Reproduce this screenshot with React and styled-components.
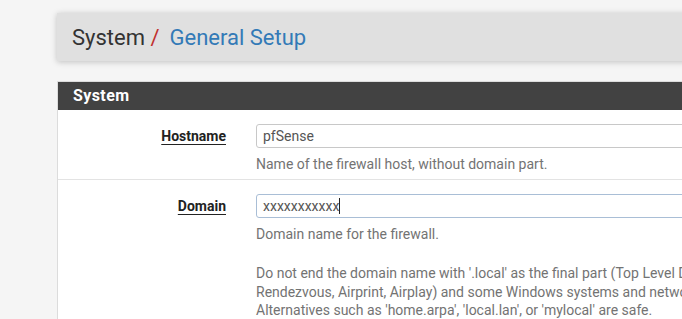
import React from "react";
import styled, { createGlobalStyle } from "styled-components";

const Global = createGlobalStyle`
  html, body { margin: 0; padding: 0; overflow: hidden; }
  body {
    background: #f5f5f5;
    font-family: Roboto, "Liberation Sans", Arial, sans-serif;
    font-size: 14px;
    color: #333;
  }
`;

const Page = styled.div`
  width: 1000px;
  padding: 13px 0 0 57px;
`;

const PageHeader = styled.div`
  height: 48px;
  background: #e0e0e0;
  box-shadow: 0 1px 6px rgba(0, 0, 0, 0.22);
  display: flex;
  align-items: center;
  padding: 0 15px;
  margin-bottom: 20px;
`;

const Title = styled.h1`
  margin: 0;
  font-size: 22px;
  font-weight: 400;
  color: #333;
  line-height: 1;
  padding-top: 2px;
`;

const Slash = styled.span`
  color: #c0302e;
`;

const Crumb = styled.span`
  color: #337ab7;
  margin-left: 10px;
`;

const Panel = styled.section`
  background: #fff;
  border: 1px solid #dcdcdc;
  border-right: none;
`;

const PanelHeading = styled.h2`
  margin: 0;
  height: 28px;
  background: #424242;
  color: #fff;
  font-size: 16px;
  font-weight: 700;
  letter-spacing: 0.4px;
  line-height: 28px;
  padding-left: 15px;
`;

const Row = styled.div`
  display: grid;
  grid-template-columns: 168px 1fr;
  column-gap: 30px;
  padding: 14px 0 5px;
  border-bottom: ${(p) => (p.$last ? "none" : "1px solid #e3e3e3")};
`;

const Label = styled.label`
  text-align: right;
  font-weight: 700;
  color: #222;
  line-height: 18px;
  padding-top: 3px;
  text-decoration: underline;
  text-underline-offset: 3px;
  text-decoration-thickness: 1px;
`;

const Field = styled.div`
  display: flex;
  flex-direction: column;
`;

const Input = styled.div`
  height: 24px;
  box-sizing: border-box;
  border: 1px solid ${(p) => (p.$focused ? "#a9bed6" : "#c8c8c8")};
  border-radius: 3px;
  padding: 0 6px;
  display: flex;
  align-items: center;
  color: #555;
  font-size: 14px;
  background: #fff;
`;

const Caret = styled.span`
  display: inline-block;
  width: 1px;
  height: 16px;
  background: #222;
`;

const Help = styled.p`
  margin: ${(p) => (p.$gap ? "21px 0 0" : "7px 0 0")};
  color: #737373;
  font-size: 14px;
  line-height: 18.6px;
  white-space: nowrap;
`;

export default function App() {
  return (
    <>
      <Global />
      <Page>
        <PageHeader>
          <Title>
            System <Slash>/</Slash>
            <Crumb>General Setup</Crumb>
          </Title>
        </PageHeader>
        <Panel>
          <PanelHeading>System</PanelHeading>
          <Row>
            <Label>Hostname</Label>
            <Field>
              <Input>pfSense</Input>
              <Help>Name of the firewall host, without domain part.</Help>
            </Field>
          </Row>
          <Row $last>
            <Label>Domain</Label>
            <Field>
              <Input $focused>
                xxxxxxxxxxx
                <Caret />
              </Input>
              <Help>Domain name for the firewall.</Help>
              <Help $gap>
                Do not end the domain name with '.local' as the final part (Top Level Domain, TLD), The 'local' TLD is widely used by mDNS (e.g. Avahi, Bonjour,
                <br />
                Rendezvous, Airprint, Airplay) and some Windows systems and networking devices. These will not network correctly if the router uses 'local' as its TLD.
                <br />
                Alternatives such as 'home.arpa', 'local.lan', or 'mylocal' are safe.
              </Help>
            </Field>
          </Row>
        </Panel>
      </Page>
    </>
  );
}
